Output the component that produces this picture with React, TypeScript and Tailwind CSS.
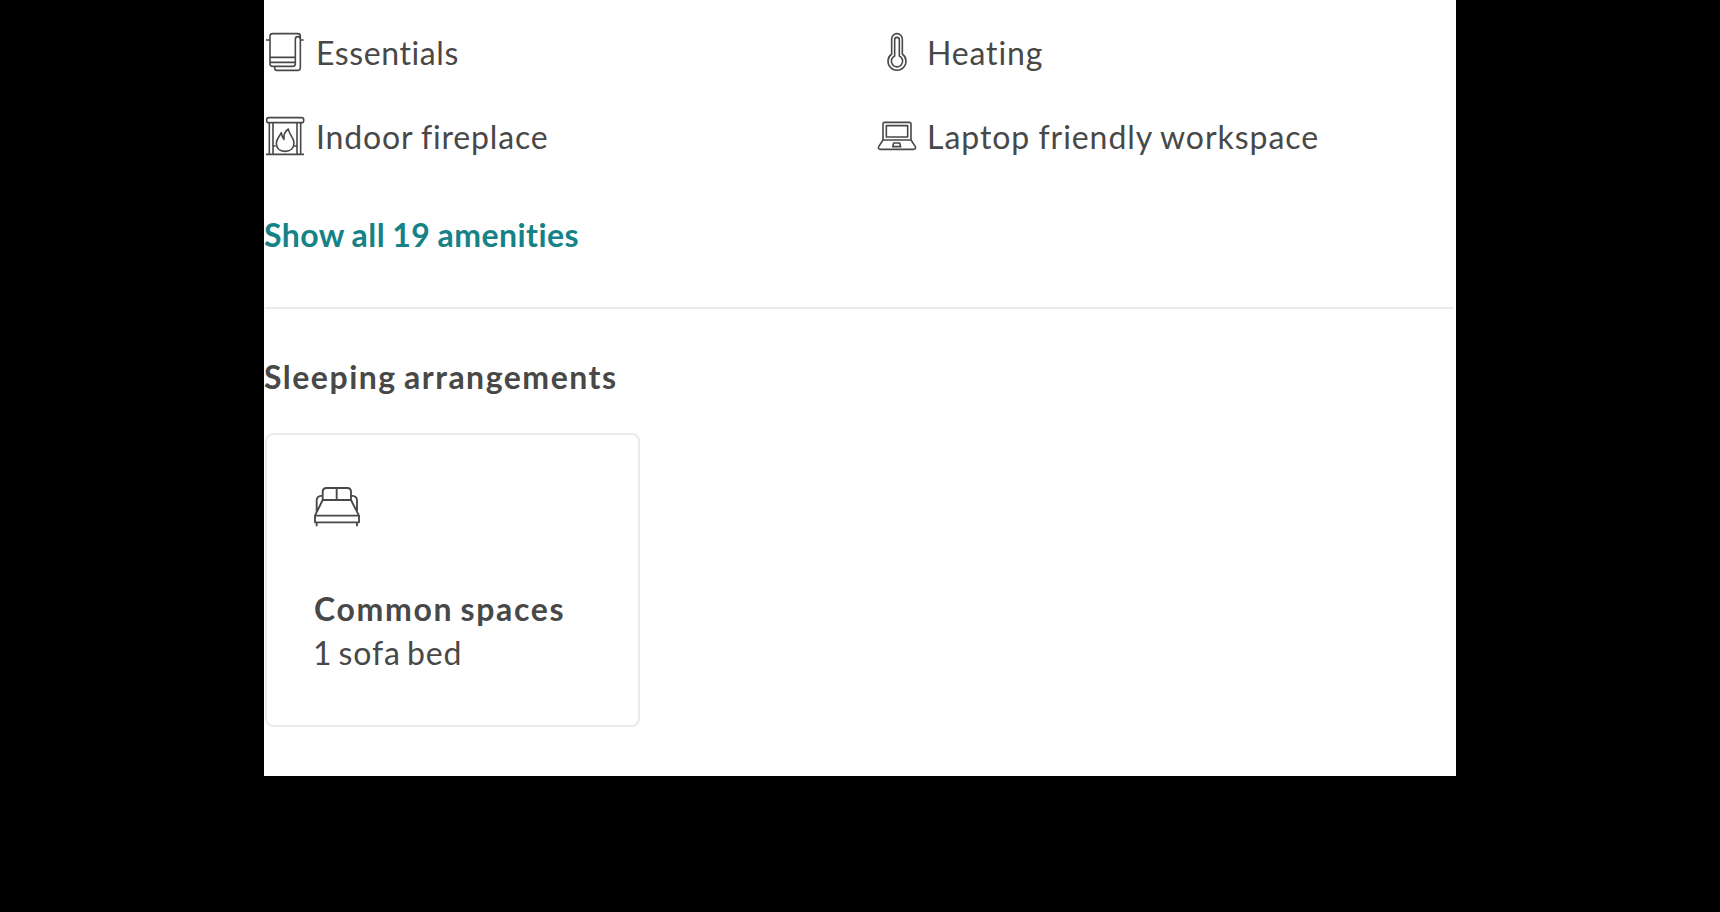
import type { ReactNode } from "react";

function Icon({ viewBox, children }: { viewBox: string; children: ReactNode }) {
  return (
    <svg
      className="h-11 w-[42px] shrink-0"
      viewBox={viewBox}
      fill="none"
      stroke="currentColor"
      strokeWidth="4.8"
      strokeLinejoin="round"
    >
      {children}
    </svg>
  );
}

function TowelIcon() {
  return (
    <Icon viewBox="24 24 126 132">
      <path d="M42 131V49q0-8 8-8h75q8 0 8 8v94q0 8-8 8H62q-6 0-6-6v-6M118 131q0 8-8 8H50q-8 0-8-8M118 131V58q0-8 7-8M133 58q0-8-8-8M42 112h76M42 127h76M30 60h12M133 60h10" />
    </Icon>
  );
}

function FireplaceIcon() {
  return (
    <Icon viewBox="24 21 126 132">
      <rect x="32" y="38" width="111" height="15" rx="6" />
      <path d="M40 53v95M51 53v95M123 53v95M134 53v95M30 148h25M119 148h25M55 148h64" />
      <path d="M51 123h8M115 123h8M97 72c2 17 17 25 17 43 0 15-11 24-27 24s-26-9-26-24c0-13 9-20 15-32 1 8 2 14 8 20-2-14 3-24 13-31z" />
    </Icon>
  );
}

function ThermometerIcon() {
  return (
    <Icon viewBox="30 24 126 132">
      <path d="M77 57a16 16 0 0 1 32 0v45a27 27 0 1 1-32 0z" />
      <path d="M86 59a7 7 0 0 1 14 0v49a17 17 0 1 1-14 0z" />
    </Icon>
  );
}

function LaptopIcon() {
  return (
    <Icon viewBox="31 21 126 132">
      <path d="M52 105V57q0-5 5-5h74q5 0 5 5v48M52 105h84l13 20q3 8-5 8H44q-8 0-5-8z" />
      <path d="M62 62h64v34H62zM84 114h18l3 11H81z" />
    </Icon>
  );
}

function BedIcon() {
  return (
    <svg
      className="size-12"
      viewBox="43 39 144 144"
      fill="none"
      stroke="currentColor"
      strokeWidth="5.6"
      strokeLinejoin="round"
    >
      <path d="M69 90V66q0-12 12-12h62q11 0 11 12v24zM111 54v36M69 90L46 137v20h132v-20L154 90M46 137h132M51 126V91q0-13 18-14M172 126V91q0-13-18-14M51 157v12M172 157v12" />
    </svg>
  );
}

function Amenity({ icon, children }: { icon: ReactNode; children: ReactNode }) {
  return (
    <div className="flex h-[84px] items-center gap-[9px]">
      {icon}
      <span className="pt-[6px]">{children}</span>
    </div>
  );
}

export default function App() {
  return (
    <div className="flex h-[912px] w-[1720px] items-start bg-black pl-[264px] font-['Lato',sans-serif] text-[32px] leading-[44px] whitespace-nowrap text-[#484848]">
      <main className="flex h-[776px] w-[1192px] flex-col bg-white pt-2">
        <section className="grid grid-cols-[612px_580px]">
          <Amenity icon={<TowelIcon />}>
            <span className="pl-px tracking-[0.6px]">Essentials</span>
          </Amenity>
          <Amenity icon={<ThermometerIcon />}>
            <span className="tracking-[0.85px]">Heating</span>
          </Amenity>
          <Amenity icon={<FireplaceIcon />}>
            <span className="pl-px tracking-[0.85px] [word-spacing:-1px]">Indoor fireplace</span>
          </Amenity>
          <Amenity icon={<LaptopIcon />}>
            <span className="tracking-[0.95px] [word-spacing:-1px]">Laptop friendly workspace</span>
          </Amenity>
        </section>
        <a className="mt-[37px] font-bold text-[#158287]">
          <span className="tracking-[0.45px] [word-spacing:-1px]">Show all 19 amenities</span>
        </a>
        <hr className="mt-[50px] mr-[3px] ml-px h-0.5 border-0 bg-[#ebebeb]" />
        <h2 className="mt-[46px] font-bold">
          <span className="tracking-[1.5px] [word-spacing:-2px]">Sleeping arrangements</span>
        </h2>
        <section className="mt-[34px] ml-px flex h-[294px] w-[375px] flex-col rounded-lg border-2 border-[#ebebeb] pt-[48px] pl-[47px]">
          <BedIcon />
          <h3 className="mt-[56px] font-bold">
            <span className="tracking-[1.65px] [word-spacing:-2px]">Common spaces</span>
          </h3>
          <p className="-ml-px">
            <span className="tracking-[0.9px] [word-spacing:-3px]">1 sofa bed</span>
          </p>
        </section>
      </main>
    </div>
  );
}
